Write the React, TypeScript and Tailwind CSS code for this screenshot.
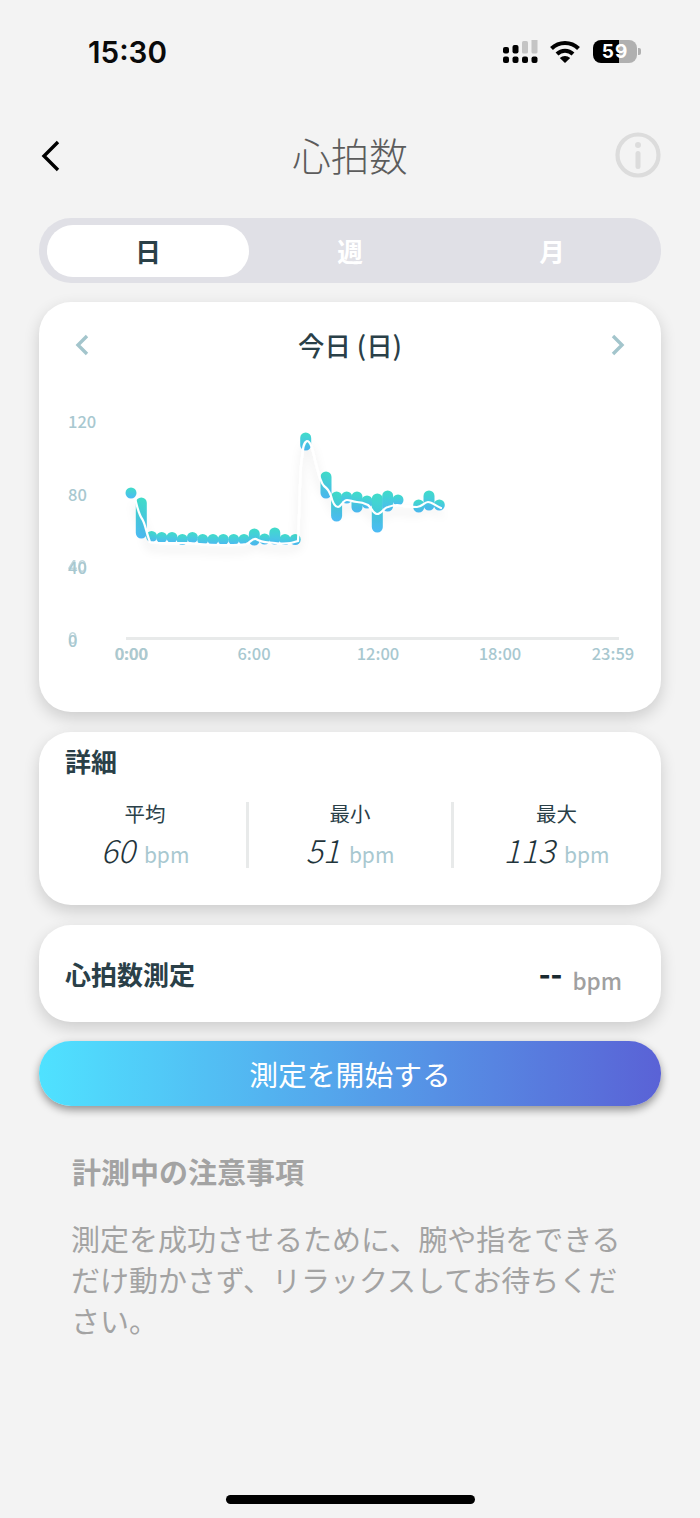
const FONT = "font-['Noto_Sans_CJK_JP','Noto_Sans',sans-serif]";

// [x, top, bottom] of each heart-rate bar, in page pixels
const BARS: [number, number, number][] = [
  [131, 493, 493],
  [141.3, 503, 533],
  [151.6, 536.5, 536.5],
  [161.7, 537.5, 537.5],
  [172, 537.5, 537.5],
  [182.3, 539.5, 539.5],
  [192.4, 537.5, 537.5],
  [202.7, 539.5, 539.5],
  [213, 539.5, 539.5],
  [223.3, 539.5, 539.5],
  [233.7, 539.5, 539.5],
  [244, 539.5, 539.5],
  [254.3, 534, 540],
  [264.6, 539, 539],
  [274.8, 533, 539],
  [285, 539.5, 539.5],
  [295.2, 539.5, 539.5],
  [305.7, 438, 445],
  [326, 477, 493],
  [336.6, 497, 516],
  [346.7, 497, 498],
  [357, 497, 507],
  [367, 501, 503],
  [377.3, 499, 527],
  [387.7, 496, 506],
  [398, 500, 500],
  [418.7, 505, 507],
  [429, 496, 505],
  [439.3, 506, 505],
];

const LINE =
  'M135.5 500 C137 506 138 512 141.5 518 C145 522 146 532 150 542 C160 544 175 543 190 543 C205 545 235 546 246 544 C250 543 252 538 256 539 C262 543 268 542 275 543 C282 544 290 544 298 541 C300 500 300 462 302 458 C303 446 304 442 307 441 C310 441 312 446 315 460 C318 472 320 482 324 486 C327 488 329 490 331 496 C333 504 335 507 338 507 C341 507 343 500 347 500 C350 500 353 502 357 502 C361 502 364 503 368 505 C372 508 373 514 377 514 C382 514 384 507 388 507 C391 506 394 505 397 505 C403 506 410 507 417 507 C422 507 424 502 428 502 C432 502 436 506 441 508';

const X_LABELS: [string, number][] = [
  ['0:00', 131],
  ['6:00', 254],
  ['12:00', 378],
  ['18:00', 500],
  ['23:59', 613],
];

const Y_LABELS: [string, number][] = [
  ['120', 428],
  ['80', 501],
  ['40', 574],
  ['0', 647],
];

const AXIS_FONT = { fontFamily: "'Noto Sans CJK JP', sans-serif" };

function Chart() {
  return (
    <svg width="622" height="280" viewBox="39 400 622 280" className="block">
      <defs>
        <linearGradient id="bar" x1="0" y1="0" x2="0" y2="1">
          <stop offset="0" stopColor="#40dcc8" />
          <stop offset="1" stopColor="#4dbaf5" />
        </linearGradient>
        <filter id="soft" x="-10%" y="-10%" width="120%" height="130%">
          <feDropShadow dx="0" dy="6" stdDeviation="5" floodColor="#000" floodOpacity="0.14" />
        </filter>
      </defs>

      {Y_LABELS.map(([t, y]) => (
        <text key={t} x="68" y={y} fontSize="16.5" fontWeight="500" fill="#a8c8d0" style={AXIS_FONT}>
          {t}
        </text>
      ))}
      <text x="68" y="572" fontSize="16.5" fontWeight="500" fill="#a8c8d0" opacity="0.7" style={AXIS_FONT}>
        40
      </text>
      <text x="68" y="644" fontSize="16.5" fontWeight="500" fill="#a8c8d0" opacity="0.7" style={AXIS_FONT}>
        0
      </text>

      <rect x="126" y="637" width="493" height="3" fill="#e8eaea" />
      {X_LABELS.map(([t, x]) => (
        <text key={t} x={x} y="660" textAnchor="middle" fontSize="16.5" fontWeight="500" fill="#a8c8d0" style={AXIS_FONT}>
          {t}
        </text>
      ))}
      <text x="132" y="660" textAnchor="middle" fontSize="16.5" fontWeight="500" fill="#a8c8d0" opacity="0.7" style={AXIS_FONT}>
        0:00
      </text>

      {BARS.map(([x, top, bottom]) => {
        const h = Math.max(bottom - top, 0) + 11;
        return <rect key={x} x={x - 5.5} y={Math.min(top, bottom) - 5.5} width="11" height={h} rx="5.5" fill="url(#bar)" />;
      })}

      <path d={LINE} fill="none" stroke="#fff" strokeWidth="2.2" strokeLinecap="round" filter="url(#soft)" />
    </svg>
  );
}

function StatusBar() {
  return (
    <div className="flex h-[104px] items-start justify-between pl-[88px] pr-[59px] pt-[33px]">
      <span className="font-['Inter',sans-serif] text-[29.6px] font-semibold leading-[38px] text-[#0a0a0a]">15:30</span>
      <div className="flex items-center pt-[6px]">
        <svg width="36" height="24" viewBox="0 0 36 24" className="mr-[11px] mt-[1px]">
          <rect x="0" y="7" width="6" height="6.5" rx="2" fill="#000" />
          <rect x="9.5" y="5" width="6" height="8.5" rx="2" fill="#000" />
          <rect x="19" y="1" width="6" height="12.5" rx="1.5" fill="#c4c4c4" />
          <rect x="28.5" y="-3" width="6" height="16.5" rx="1.5" fill="#c4c4c4" />
          <rect x="0" y="16.5" width="6" height="6.5" rx="2" fill="#000" />
          <rect x="9.5" y="16.5" width="6" height="6.5" rx="2" fill="#000" />
          <rect x="19" y="16.5" width="6" height="6.5" rx="2" fill="#000" />
          <rect x="28.5" y="16.5" width="6" height="6.5" rx="2" fill="#000" />
        </svg>
        <svg width="30" height="24" viewBox="0 0 30 24" className="mr-[13px]">
          <path d="M1.5 8.5 C9 1 21 1 28.5 8.5" fill="none" stroke="#000" strokeWidth="4" />
          <path d="M7 14 C11.5 9.5 18.5 9.5 23 14" fill="none" stroke="#000" strokeWidth="4" />
          <path d="M15 23 L9.8 18 C12.8 15.2 17.2 15.2 20.2 18 Z" fill="#000" />
        </svg>
        <div className="flex items-center">
          <div className="flex h-[23px] w-[44px] items-center justify-center rounded-[8px] bg-[linear-gradient(90deg,#000_58%,#b0b0b0_58%)] font-['Inter',sans-serif] text-[19px] font-bold leading-none tracking-[1px] text-white">
            59
          </div>
          <div className="ml-[1px] h-[7px] w-[3px] rounded-r-[2px] bg-[#b0b0b0]" />
        </div>
      </div>
    </div>
  );
}

function Stat({ label, value, divider }: { label: string; value: string; divider?: boolean }) {
  return (
    <div className={`flex h-[66px] w-[205px] flex-col items-center ${divider ? 'border-r-[3px] border-[#e8eaea]' : ''}`}>
      <div className="text-[20.5px] leading-[22px] text-[#2a4048]">{label}</div>
      <div className="mt-[6px] flex items-baseline gap-[9px]">
        <span className="text-[32px] font-light italic leading-[38px] text-[#1f343b]">{value}</span>
        <span className="text-[21px] font-normal leading-[38px] text-[#a8c8d0]">bpm</span>
      </div>
    </div>
  );
}

export default function App() {
  return (
    <div className={`${FONT} relative flex h-[1518px] w-[700px] flex-col overflow-hidden bg-[#f3f3f3]`}>
      <StatusBar />

      <div className="grid h-[114px] grid-cols-[1fr_auto_1fr] items-start px-[39px] pt-[25px]">
        <svg width="24" height="34" viewBox="0 0 24 34" className="mt-[10px]">
          <path d="M19 3 L5 17 L19 31" fill="none" stroke="#000" strokeWidth="3.4" />
        </svg>
        <div className="text-[38.5px] font-light leading-[50px] text-[#5c5c5c]">心拍数</div>
        <svg width="46" height="46" viewBox="0 0 46 46" className="mt-[3px] justify-self-end">
          <circle cx="23" cy="23" r="20.5" fill="none" stroke="#dcdcdc" strokeWidth="4.2" />
          <circle cx="23" cy="13" r="3" fill="#dcdcdc" />
          <rect x="20.5" y="19" width="5" height="18" rx="2.5" fill="#dcdcdc" />
        </svg>
      </div>

      <div className="mx-[39px] flex h-[65px] items-center rounded-[32px] bg-[#e0e0e6] px-[8px]">
        <div className="flex h-[52px] w-[202px] items-center justify-center rounded-[26px] bg-white pt-[1px] text-[25.6px] font-bold text-[#2a4048]">日</div>
        <div className="flex h-[52px] w-[202px] items-center justify-center pt-[1px] text-[25.6px] font-bold text-white">週</div>
        <div className="flex h-[52px] flex-1 items-center justify-center pt-[1px] text-[25.6px] font-bold text-white">月</div>
      </div>

      <div className="mx-[39px] mt-[19px] h-[410px] rounded-[32px] bg-white shadow-[0_6px_16px_rgba(0,0,0,0.16)]">
        <div className="flex h-[98px] items-start justify-between px-[35px] pt-[25px]">
          <svg width="16" height="24" viewBox="0 0 16 24" className="mt-[6px]">
            <path d="M13 3 L4 12 L13 21" fill="none" stroke="#a3c5cc" strokeWidth="3.4" />
          </svg>
          <div className="text-[26.4px] font-medium leading-[36px] text-[#2a4048]">今日 (日)</div>
          <svg width="16" height="24" viewBox="0 0 16 24" className="mt-[6px]">
            <path d="M3 3 L12 12 L3 21" fill="none" stroke="#a3c5cc" strokeWidth="3.4" />
          </svg>
        </div>
        <Chart />
      </div>

      <div className="mx-[39px] mt-[20px] h-[173px] rounded-[32px] bg-white pl-[5px] pt-[11px] shadow-[0_6px_16px_rgba(0,0,0,0.16)]">
        <div className="pl-[21px] text-[26px] font-bold leading-[36px] text-[#2a4048]">詳細</div>
        <div className="mt-[23px] flex">
          <Stat label="平均" value="60" divider />
          <Stat label="最小" value="51" divider />
          <Stat label="最大" value="113" />
        </div>
      </div>

      <div className="mx-[39px] mt-[20px] flex h-[97px] items-center justify-between rounded-[32px] bg-white pl-[26px] pr-[39px] shadow-[0_6px_16px_rgba(0,0,0,0.16)]">
        <span className="text-[26px] font-bold text-[#2a4048]">心拍数測定</span>
        <div className="flex items-baseline gap-[10px]">
          <span className="-translate-y-[2px] text-[32px] font-bold leading-none text-[#1a2a30]">--</span>
          <span className="translate-y-[2px] text-[22.5px] font-medium leading-none text-[#a0a0a0]">bpm</span>
        </div>
      </div>

      <div className="mx-[39px] mt-[19px] flex h-[65px] items-center justify-center rounded-[32px] bg-[linear-gradient(90deg,#4fe2ff,#5a62d6)] text-[28.8px] text-white shadow-[0_4px_8px_rgba(0,0,0,0.4)]">
        測定を開始する
      </div>

      <div className="mx-[72px] mt-[45px] text-[29px] font-bold leading-[40px] text-[#a3a3a3]">計測中の注意事項</div>
      <div className="ml-[71px] mr-[60px] mt-[27px] text-[29px] font-normal leading-[41px] text-[#a3a3a3]">
        測定を成功させるために、腕や指をできるだけ動かさず、リラックスしてお待ちください。
      </div>

      <div className="absolute bottom-[14px] left-[226px] h-[9px] w-[249px] rounded-full bg-black" />
    </div>
  );
}
